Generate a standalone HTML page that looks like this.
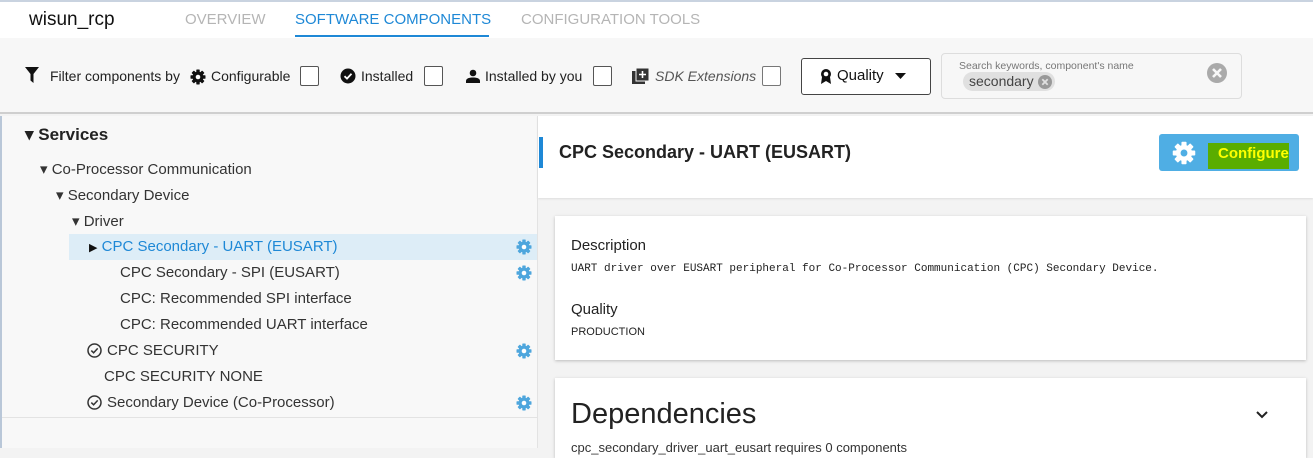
<!DOCTYPE html>
<html><head><meta charset="utf-8"><style>
*{margin:0;padding:0;box-sizing:border-box}
body{width:1313px;height:448px;overflow:hidden;position:relative;font-family:"Liberation Sans",sans-serif;background:#f3f3f3;color:#222}
.a{position:absolute;white-space:nowrap}
.cb{position:absolute;width:19px;height:20px;border:1.5px solid #555;border-radius:2px;background:#fff}
.tree{font-size:15px;color:#333}
</style></head><body>
<svg width="0" height="0" style="position:absolute"><defs>
<g id="gb"><rect x="6.3" y="0.5" width="3.4" height="15" rx="0.6"/><rect x="6.3" y="0.5" width="3.4" height="15" rx="0.6" transform="rotate(45 8 8)"/><rect x="6.3" y="0.5" width="3.4" height="15" rx="0.6" transform="rotate(90 8 8)"/><rect x="6.3" y="0.5" width="3.4" height="15" rx="0.6" transform="rotate(135 8 8)"/><circle cx="8" cy="8" r="5.4"/></g>
<g id="g"><g fill="currentColor"><use href="#gb"/></g><circle cx="8" cy="8" r="2.3" fill="#fff"/></g>
</defs></svg>
<!-- header -->
<div class="a" style="left:0;top:0;width:1313px;height:38px;background:#fff;border-top:2px solid #c9d3e0"></div>
<div class="a" style="left:29px;top:9px;font-size:19px;color:#111">wisun_rcp</div>
<div class="a" style="left:185px;top:11px;font-size:15px;color:#b5b5b5">OVERVIEW</div>
<div class="a" style="left:295px;top:11px;font-size:15px;color:#1e88d6">SOFTWARE COMPONENTS</div>
<div class="a" style="left:295px;top:35px;width:194px;height:2px;background:#1e88d6"></div>
<div class="a" style="left:521px;top:11px;font-size:15px;color:#b5b5b5">CONFIGURATION TOOLS</div>
<!-- toolbar -->
<div class="a" style="left:0;top:38px;width:1313px;height:76px;background:#f7f7f7;border-bottom:2px solid #cfcfcf"></div>
<svg class="a" style="left:25px;top:67px" width="14" height="16"><path d="M0 0H14L8.5 7V16L5.5 13.5V7Z" fill="#111"/></svg>
<div class="a" style="left:50px;top:68px;font-size:14px">Filter components by</div>
<svg class="a" style="left:190px;top:69px;color:#111" width="16" height="16"><use href="#g"/></svg>
<div class="a" style="left:211px;top:68px;font-size:14px">Configurable</div>
<div class="cb" style="left:300px;top:66px"></div>
<svg class="a" style="left:340px;top:68px" width="16" height="16"><circle cx="8" cy="8" r="7.5" fill="#111"/><path d="M4.5 8.2 7 10.6 11.5 5.8" stroke="#fff" stroke-width="1.8" fill="none"/></svg>
<div class="a" style="left:361px;top:68px;font-size:14px">Installed</div>
<div class="cb" style="left:424px;top:66px"></div>
<svg class="a" style="left:466px;top:69px" width="14" height="14"><circle cx="7" cy="4" r="3.3" fill="#111"/><path d="M0 14V12C0 9 4 8.5 7 8.5S14 9 14 12V14Z" fill="#111"/></svg>
<div class="a" style="left:485px;top:68px;font-size:14px">Installed by you</div>
<div class="cb" style="left:593px;top:66px"></div>
<svg class="a" style="left:632px;top:67px" width="18" height="18"><rect x="0" y="4" width="13" height="13" fill="#333"/><rect x="4" y="1" width="13" height="13" fill="#333" stroke="#f7f7f7" stroke-width="1"/><path d="M10.5 4v7M7 7.5h7" stroke="#fff" stroke-width="1.6"/></svg>
<div class="a" style="left:655px;top:68px;font-size:14px;font-style:italic;color:#555">SDK Extensions</div>
<div class="cb" style="left:762px;top:66px;border-color:#777"></div>
<div class="a" style="left:801px;top:58px;width:130px;height:37px;border:1.5px solid #444;border-radius:3px;background:#fff"></div>
<svg class="a" style="left:820px;top:68px" width="12" height="16"><circle cx="6" cy="6" r="5" fill="#111"/><circle cx="6" cy="6" r="2.3" fill="#fff"/><path d="M2 9 1 16 6 13 11 16 10 9Z" fill="#111"/></svg>
<div class="a" style="left:837px;top:67px;font-size:15px;color:#111">Quality</div>
<svg class="a" style="left:895px;top:73px" width="11" height="6"><path d="M0 0H11L5.5 6Z" fill="#111"/></svg>
<div class="a" style="left:941px;top:53px;width:301px;height:46px;border:1px solid #ddd;border-radius:4px;background:#f7f7f7"></div>
<div class="a" style="left:959px;top:60px;font-size:10.5px;color:#777">Search keywords, component's name</div>
<div class="a" style="left:963px;top:72px;width:92px;height:19px;border-radius:10px;background:#e0e0e0"></div>
<div class="a" style="left:969px;top:73px;font-size:14px;color:#444">secondary</div>
<svg class="a" style="left:1038px;top:75px" width="14" height="14"><circle cx="7" cy="7" r="7" fill="#999"/><path d="M4.3 4.3 9.7 9.7M9.7 4.3 4.3 9.7" stroke="#e0e0e0" stroke-width="1.8"/></svg>
<svg class="a" style="left:1207px;top:63px" width="20" height="20"><circle cx="10" cy="10" r="10" fill="#aaa"/><path d="M6 6 14 14M14 6 6 14" stroke="#f7f7f7" stroke-width="2.6"/></svg>
<!-- left panel -->
<div class="a" style="left:0;top:116px;width:538px;height:332px;background:#f8f8f8;border-left:2px solid #b9c7d8;border-right:1px solid #e3e3e3"></div>
<div class="a" style="left:2px;top:417px;width:535px;height:1px;background:#e3e3e3"></div>
<div class="a" style="left:69px;top:234px;width:468px;height:26px;background:#ddedf7"></div>
<div class="a" style="left:25px;top:125px;font-size:17px;font-weight:bold;color:#222">▾ Services</div>
<div class="a tree" style="left:40px;top:160px">▾ Co-Processor Communication</div>
<div class="a tree" style="left:56px;top:186px">▾ Secondary Device</div>
<div class="a tree" style="left:72px;top:212px">▾ Driver</div>
<div class="a tree" style="left:89px;top:238px;color:#1e88d6"><span style="color:#111;font-size:11px">▶</span> CPC Secondary - UART (EUSART)</div>
<div class="a tree" style="left:120px;top:264px">CPC Secondary - SPI (EUSART)</div>
<div class="a tree" style="left:120px;top:290px">CPC: Recommended SPI interface</div>
<div class="a tree" style="left:120px;top:316px">CPC: Recommended UART interface</div>
<svg class="a" style="left:87px;top:343px" width="15" height="15"><circle cx="7.5" cy="7.5" r="6.5" fill="none" stroke="#333" stroke-width="1.5"/><path d="M4.3 7.6 6.6 9.8 10.7 5.4" stroke="#333" stroke-width="1.5" fill="none"/></svg>
<div class="a tree" style="left:107px;top:342px">CPC SECURITY</div>
<div class="a tree" style="left:104px;top:368px">CPC SECURITY NONE</div>
<svg class="a" style="left:87px;top:395px" width="15" height="15"><circle cx="7.5" cy="7.5" r="6.5" fill="none" stroke="#333" stroke-width="1.5"/><path d="M4.3 7.6 6.6 9.8 10.7 5.4" stroke="#333" stroke-width="1.5" fill="none"/></svg>
<div class="a tree" style="left:107px;top:394px">Secondary Device (Co-Processor)</div>
<svg class="a" style="left:516px;top:239px;color:#4ea6dd" width="16" height="16"><use href="#g"/></svg>
<svg class="a" style="left:516px;top:265px;color:#4ea6dd" width="16" height="16"><use href="#g"/></svg>
<svg class="a" style="left:516px;top:343px;color:#4ea6dd" width="16" height="16"><use href="#g"/></svg>
<svg class="a" style="left:516px;top:395px;color:#4ea6dd" width="16" height="16"><use href="#g"/></svg>
<!-- right -->
<div class="a" style="left:538px;top:116px;width:775px;height:82px;background:#fff;box-shadow:0 1px 2px #ddd"></div>
<div class="a" style="left:539px;top:137px;width:4px;height:31px;background:#1e88d6"></div>
<div class="a" style="left:559px;top:142px;font-size:18px;font-weight:bold;color:#222">CPC Secondary - UART (EUSART)</div>
<div class="a" style="left:1159px;top:134px;width:140px;height:37px;background:#4faee4;border-radius:3px"></div>
<svg class="a" style="left:1172px;top:141px" width="24" height="24"><g transform="scale(1.5)"><g fill="#fff"><use href="#gb"/></g><circle cx="8" cy="8" r="2.3" fill="#4faee4"/></g></svg>
<div class="a" style="left:1208px;top:143px;width:81px;height:26px;background:#5aad00"></div>
<div class="a" style="left:1218px;top:145px;font-size:15px;font-weight:bold;color:#ffff00">Configure</div>
<div class="a" style="left:555px;top:216px;width:751px;height:144px;background:#fff;box-shadow:0 1px 3px #bbb"></div>
<div class="a" style="left:571px;top:237px;font-size:15px;color:#222">Description</div>
<div class="a" style="left:571px;top:263px;font-size:11px;font-family:'Liberation Mono',monospace;color:#222">UART driver over EUSART peripheral for Co-Processor Communication (CPC) Secondary Device.</div>
<div class="a" style="left:571px;top:301px;font-size:15px;color:#222">Quality</div>
<div class="a" style="left:571px;top:326px;font-size:11px;color:#222">PRODUCTION</div>
<div class="a" style="left:555px;top:378px;width:751px;height:80px;background:#fff;box-shadow:0 1px 3px #bbb"></div>
<div class="a" style="left:571px;top:398px;font-size:29px;color:#222">Dependencies</div>
<svg class="a" style="left:1256px;top:411px" width="12" height="8"><path d="M1 1 6 6 11 1" stroke="#222" stroke-width="2" fill="none"/></svg>
<div class="a" style="left:571px;top:440px;font-size:13px;color:#333">cpc_secondary_driver_uart_eusart requires 0 components</div>
</body></html>
